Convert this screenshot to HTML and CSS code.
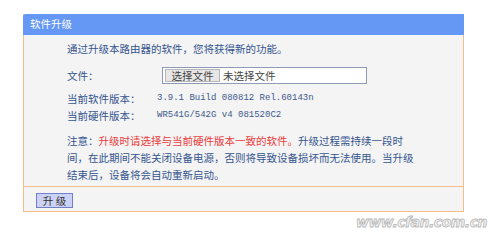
FILE: index.html
```html
<!DOCTYPE html>
<html lang="zh-CN">

<head>
    <meta charset="UTF-8">
    <title>软件升级</title>
    <link rel="stylesheet" href="styles.css">
</head>

<body>
    <div class="panel">
        <div class="panel-title">软件升级</div>
        <div class="panel-body">
            <p class="intro">通过升级本路由器的软件，您将获得新的功能。</p>
            <div class="row file-row">
                <span class="label">文件：</span>
                <div class="file-box">
                    <span class="file-btn">选择文件</span>
                    <span class="file-name">未选择文件</span>
                </div>
            </div>
            <div class="row">
                <span class="label">当前软件版本：</span>
                <span class="value">3.9.1 Build 080812 Rel.60143n</span>
            </div>
            <div class="row">
                <span class="label">当前硬件版本：</span>
                <span class="value">WR541G/542G v4 081520C2</span>
            </div>
            <p class="note">注意：<span class="warn">升级时请选择与当前硬件版本一致的软件。</span>升级过程需持续一段时间，在此期间不能关闭设备电源，否则将导致设备损坏而无法使用。当升级结束后，设备将会自动重新启动。</p>
        </div>
        <div class="panel-footer">
            <button type="button" class="upgrade-btn">升 级</button>
        </div>
    </div>
    <div class="watermark">www.cfan.com.cn</div>
</body>

</html>
```

FILE: styles.css
```css
* {
    box-sizing: border-box;
}

body {
    margin: 0;
    padding: 14px 0 0 0;
    width: 500px;
    height: 240px;
    overflow: hidden;
    background-color: #fff;
    font-family: "Noto Sans CJK SC", "Liberation Sans", sans-serif;
    font-size: 10.5px;
    color: #34548f;
    position: relative;
}

.panel {
    margin-left: 23px;
    width: 441px;
    background-color: #f4f4f4;
    border: 1px solid #f3bf86;
    border-top: none;
}

.panel-title {
    height: 21px;
    line-height: 20px;
    margin: 0 -1px;
    padding-left: 7px;
    background-color: #6598f5;
    color: #fff;
    border-radius: 3px 0 0 0;
}

.panel-body {
    padding: 5px 0 3px 43px;
    line-height: 17px;
}

.panel-body p {
    margin: 0;
}

/* label + value rows */
.row {
    display: flex;
    align-items: center;
    height: 17px;
}

.row .label {
    width: 90px;
    flex-shrink: 0;
}

.file-row {
    height: 18px;
    margin: 9px 0 6px 0;
}

.file-box {
    margin-left: 5px;
    width: 205px;
    height: 17px;
    border: 1px solid #8e9bb5;
    background-color: #fff;
    display: flex;
    align-items: stretch;
    color: #444;
}

.file-btn {
    margin: 1px 0 1px 2px;
    width: 55px;
    background-color: #e6e6e6;
    border: 1px solid #b8b8b8;
    text-align: center;
    line-height: 12px;
}

.file-name {
    padding-left: 3px;
    line-height: 15px;
}

.value {
    font-family: "Liberation Mono", monospace;
    font-size: 9px;
    color: #3d5a8c;
}

.note {
    margin-top: 8px !important;
    width: 352px;
}

.warn {
    color: #ec3a3a;
}

.panel-footer {
    border-top: 1px solid #f3bf86;
    height: 25px;
    padding: 6px 0 0 12px;
}

.upgrade-btn {
    display: block;
    width: 37px;
    height: 15px;
    padding: 0;
    font-family: inherit;
    font-size: 10.5px;
    line-height: 13px;
    color: #333;
    background-color: #ccd2f5;
    border: 1px solid #6f80c8;
}

.watermark {
    position: absolute;
    left: 356px;
    top: 214px;
    font-family: "DejaVu Sans", sans-serif;
    font-size: 14px;
    font-weight: bold;
    font-style: italic;
    color: #f2f2f2;
    -webkit-text-stroke: 0.8px #b9b9b9;
    letter-spacing: -0.5px;
}
```
